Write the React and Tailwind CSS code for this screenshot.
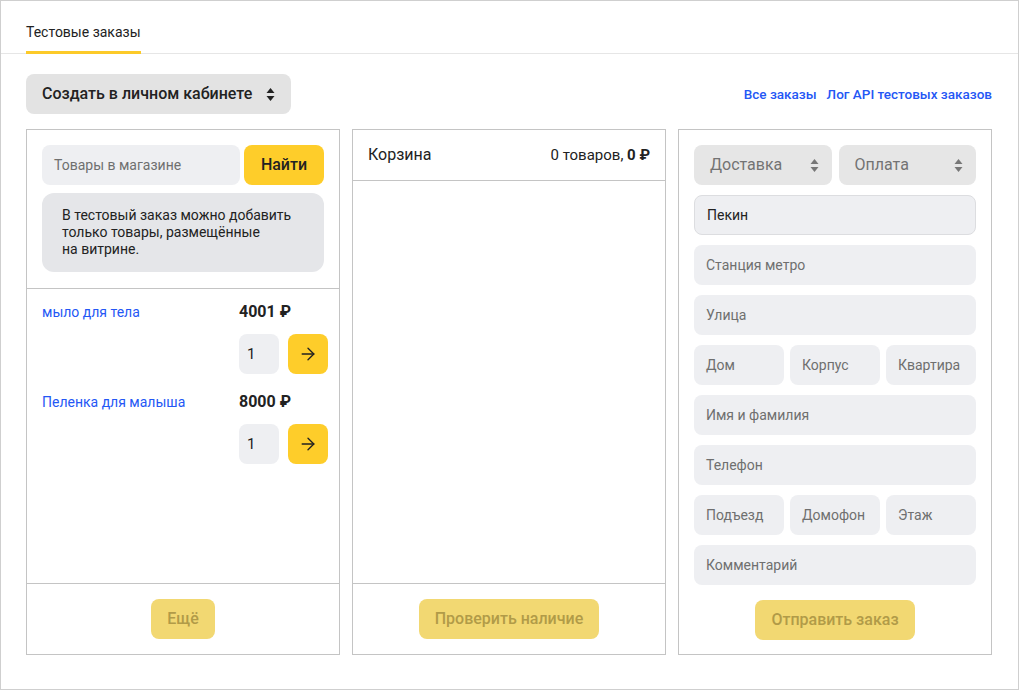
import React from 'react';
import { ArrowRight } from 'lucide-react';

function SortIcon({ color = '#222' }) {
  return (
    <svg width="9" height="15" viewBox="0 0 9 15" fill={color}>
      <path d="M4.5 1 L8.5 6 L0.5 6 Z" />
      <path d="M4.5 14 L8.5 9 L0.5 9 Z" />
    </svg>
  );
}

const PRODUCTS = [
  { name: 'мыло для тела', price: '4001 ₽' },
  { name: 'Пеленка для малыша', price: '8000 ₽' },
];

function Field({ label, value, className = '' }) {
  return (
    <div
      className={`h-10 rounded-lg bg-[#eeeff2] flex items-center px-3 text-[14px] ${
        value ? 'border border-[#dcdde0] text-[#222]' : 'text-[#6f6f6f]'
      } ${className}`}
    >
      {value || label}
    </div>
  );
}

function FadedButton({ children }) {
  return (
    <button className="h-10 px-4 rounded-lg bg-[#f2d872] text-[#b19b48] text-[16px] font-medium">
      {children}
    </button>
  );
}

export default function App() {
  return (
    <div
      className="w-[1019px] h-[690px] border border-[#cfcfcf] bg-white text-[#222]"
      style={{ fontFamily: 'Roboto, Arial, sans-serif' }}
    >
      <div className="h-[53px] border-b border-[#e6e6e6] px-[25px] flex items-end">
        <div className="text-[14px] leading-5 pb-[9px] border-b-[3px] border-[#fcca29] -mb-px">
          Тестовые заказы
        </div>
      </div>

      <div className="pl-[25px] pr-[26px] pt-5 flex items-center justify-between">
        <button className="h-10 px-4 rounded-lg bg-[#e3e3e3] flex items-center gap-[14px] text-[16px] font-medium">
          Создать в личном кабинете
          <SortIcon />
        </button>
        <div className="flex items-center gap-[10px] text-[13.5px] font-medium text-[#2457f5]">
          <span>Все заказы</span>
          <span>Лог API тестовых заказов</span>
        </div>
      </div>

      <div className="pl-[25px] pr-[26px] pt-[15px] grid grid-cols-3 gap-3">
        {/* catalog */}
        <div className="border border-[#c4c4c4] flex flex-col">
          <div className="p-[15px] pb-4 border-b border-[#c4c4c4]">
            <div className="flex gap-1">
              <div className="flex-1 h-10 rounded-lg bg-[#eeeff2] flex items-center px-3 text-[14px] text-[#6f6f6f]">
                Товары в магазине
              </div>
              <button className="h-10 w-20 rounded-lg bg-[#fecd2a] text-[16px] font-medium">Найти</button>
            </div>
            <div className="mt-2 rounded-xl bg-[#e5e6e9] px-5 py-[14px] text-[14px] leading-[17px] text-[#222]">
              В тестовый заказ можно добавить
              <br />
              только товары, размещённые
              <br />
              на витрине.
            </div>
          </div>
          <div className="flex-1 pl-[15px] pr-[11px]">
            {PRODUCTS.map((p) => (
              <div key={p.name} className="h-[90px] pt-[13px] flex">
                <div className="flex-1 text-[14px] leading-5 text-[#2457f5]">{p.name}</div>
                <div className="w-[89px] flex flex-col">
                  <div className="text-[16px] leading-5 font-bold">{p.price}</div>
                  <div className="mt-3 flex gap-[9px]">
                    <div className="w-10 h-10 rounded-lg bg-[#eeeff2] flex items-center pl-[8px] text-[15px]">1</div>
                    <button className="w-10 h-10 rounded-lg bg-[#fecd2a] flex items-center justify-center">
                      <ArrowRight size={20} strokeWidth={1.6} color="#222" />
                    </button>
                  </div>
                </div>
              </div>
            ))}
          </div>
          <div className="h-[71px] border-t border-[#c4c4c4] flex items-center justify-center">
            <FadedButton>Ещё</FadedButton>
          </div>
        </div>

        {/* cart */}
        <div className="border border-[#c4c4c4] flex flex-col">
          <div className="h-[51px] px-[15px] flex items-center justify-between border-b border-[#c4c4c4] text-[16px]">
            <span>Корзина</span>
            <span className="text-[15px]">
              0 товаров, <b>0 ₽</b>
            </span>
          </div>
          <div className="flex-1" />
          <div className="h-[71px] border-t border-[#c4c4c4] flex items-center justify-center">
            <FadedButton>Проверить наличие</FadedButton>
          </div>
        </div>

        {/* form */}
        <div className="border border-[#c4c4c4] px-[15px] pt-[15px] pb-[14px] flex flex-col">
          <div className="flex flex-col gap-[10px]">
            <div className="flex gap-[7px]">
              {['Доставка', 'Оплата'].map((s) => (
                <div key={s} className="flex-1 h-10 rounded-lg bg-[#e6e6e6] flex items-center justify-between pl-4 pr-[13px] text-[16px] text-[#737373]">
                  {s}
                  <SortIcon color="#777" />
                </div>
              ))}
            </div>
            <Field value="Пекин" />
            <Field label="Станция метро" />
            <Field label="Улица" />
            <div className="flex gap-[6px]">
              <Field label="Дом" className="flex-1" />
              <Field label="Корпус" className="flex-1" />
              <Field label="Квартира" className="flex-1" />
            </div>
            <Field label="Имя и фамилия" />
            <Field label="Телефон" />
            <div className="flex gap-[6px]">
              <Field label="Подъезд" className="flex-1" />
              <Field label="Домофон" className="flex-1" />
              <Field label="Этаж" className="flex-1" />
            </div>
            <Field label="Комментарий" />
          </div>
          <div className="mt-[15px] flex justify-center">
            <FadedButton>Отправить заказ</FadedButton>
          </div>
        </div>
      </div>
    </div>
  );
}
